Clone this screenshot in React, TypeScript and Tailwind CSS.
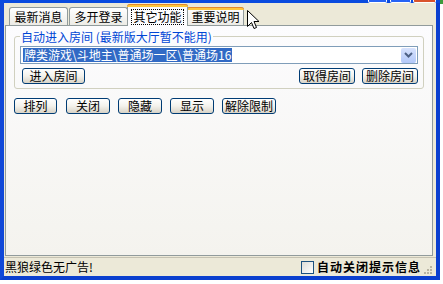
const FONT = "font-['SimSun','Noto_Sans_CJK_SC',sans-serif]";

function XpButton({ label, w }: { label: string; w: string }) {
  return (
    <button
      type="button"
      className={`${w} flex h-[16px] items-center justify-center rounded-[3px] border border-[#003C74] bg-gradient-to-b from-[#FFFFFF] via-[#F3F2EC] to-[#D8D3C7] text-[12px] leading-none text-black`}
    >
      {label}
    </button>
  );
}

function Tab({ label, w, hot }: { label: string; w: string; hot?: boolean }) {
  return (
    <div
      className={`${w} relative flex h-[18px] items-center justify-center rounded-t-[3px] border border-b-0 border-[#919B9C] bg-gradient-to-b from-[#FFFFFF] to-[#ECEBE6] text-[12px] leading-none text-black`}
    >
      {hot && <div className="absolute -left-px -right-px -top-px h-[3px] rounded-t-[3px] bg-[#FFC83C] border-t border-[#E68B2C]" />}
      {label}
    </div>
  );
}

export default function App() {
  return (
    <div className={`relative h-[284px] w-[443px] overflow-hidden bg-white ${FONT}`}>
      <div className="flex h-[280px] w-[440px] flex-col">
        {/* title bar bottom */}
        <div className="relative h-[3px] bg-[#0A4BDF]">
          <div className="absolute bottom-0 left-[368px] h-[3px] w-[19px] rounded-b-[2px] border border-t-0 border-white bg-[#2663F5]" />
          <div className="absolute bottom-0 left-[390px] h-[3px] w-[21px] rounded-b-[2px] border border-t-0 border-white bg-[#2663F5]" />
          <div className="absolute bottom-0 left-[413px] h-[3px] w-[23px] rounded-b-[2px] border border-t-0 border-white bg-[#D9532C]" />
        </div>
        <div className="flex flex-1 border-x-4 border-b-4 border-l-[#1048D8] border-r-[#0A3FCF] border-b-[#0A3FCF] bg-[#ECE9D8]">
          <div className="flex flex-1 flex-col">
            {/* tabs */}
            <div className="flex h-[22px] items-end pl-[5px]">
              <Tab label="最新消息" w="w-[59px]" />
              <div className="w-[1px]" />
              <Tab label="多开登录" w="w-[59px]" />
              <div className="relative z-10 -mx-[1px] -mb-px flex h-[22px] w-[61px] items-center justify-center rounded-t-[3px] border border-b-0 border-[#919B9C] bg-[#FCFCFE] text-[12px] leading-none text-black">
                <div className="absolute -left-px -right-px -top-px h-[3px] rounded-t-[3px] border-t border-[#E68B2C] bg-[#FFC83C]" />
                <span className="mt-[2px] border border-dotted border-black px-[1px] py-[1px]">其它功能</span>
              </div>
              <Tab label="重要说明" w="w-[57px]" hot />
            </div>
            {/* panel */}
            <div className="ml-[1px] flex h-[231px] w-[428px] flex-col border border-[#919B9C] bg-gradient-to-b from-[#FCFCFE] to-[#F4F3EE] px-[8px]">
              <div className="relative mt-[10px] h-[53px] rounded-[3px] border border-[#D0D0BF] px-[5px] pt-[9px]">
                <div className="absolute -top-[7px] left-[5px] bg-[#FCFCFE] px-[1px] text-[12px] leading-[13px] text-[#0046D5]">
                  自动进入房间 (最新版大厅暂不能用)
                </div>
                <div className="flex h-[18px] items-center border border-[#7F9DB9] bg-white pl-[2px] pr-[1px]">
                  <span className="bg-[#316AC5] px-[1px] text-[12px] leading-[14px] text-white">
                    牌类游戏\斗地主\普通场一区\普通场16
                  </span>
                  <div className="flex-1" />
                  <div className="flex h-[15px] w-[15px] items-center justify-center rounded-[2px] bg-gradient-to-b from-[#D7E2FD] to-[#B2C8F9]">
                    <svg width="9" height="6" viewBox="0 0 9 6">
                      <path d="M1 1 L4.5 4.5 L8 1" fill="none" stroke="#4D6185" strokeWidth="2" />
                    </svg>
                  </div>
                </div>
                <div className="mt-[4px] flex items-center">
                  <div className="ml-[2px]">
                    <XpButton label="进入房间" w="w-[63px]" />
                  </div>
                  <div className="flex-1" />
                  <XpButton label="取得房间" w="w-[56px]" />
                  <div className="w-[7px]" />
                  <XpButton label="删除房间" w="w-[56px]" />
                </div>
              </div>
              <div className="mt-[9px] flex items-center">
                <XpButton label="排列" w="w-[43px]" />
                <div className="w-[9px]" />
                <XpButton label="关闭" w="w-[44px]" />
                <div className="w-[8px]" />
                <XpButton label="隐藏" w="w-[44px]" />
                <div className="w-[8px]" />
                <XpButton label="显示" w="w-[44px]" />
                <div className="w-[8px]" />
                <XpButton label="解除限制" w="w-[54px]" />
              </div>
            </div>
            {/* status bar */}
            <div className="mt-[1px] flex flex-1 items-center border-t border-[#C5C2B2] pl-[1px] pr-[4px]">
              <span className="text-[12px] leading-none text-black">黑狼绿色无广告!</span>
              <div className="flex-1" />
              <div className="h-[13px] w-[13px] border border-[#1C5180] bg-gradient-to-br from-[#DCDCD7] to-white" />
              <span className="ml-[3px] text-[12px] font-bold leading-none tracking-[1px] text-black">自动关闭提示信息</span>
              <div className="ml-[3px] mt-[6px] grid grid-cols-3 gap-[1px]">
                <div className="h-[2px] w-[2px]" />
                <div className="h-[2px] w-[2px]" />
                <div className="h-[2px] w-[2px] bg-[#B8B4A2]" />
                <div className="h-[2px] w-[2px]" />
                <div className="h-[2px] w-[2px] bg-[#B8B4A2]" />
                <div className="h-[2px] w-[2px] bg-[#B8B4A2]" />
                <div className="h-[2px] w-[2px] bg-[#B8B4A2]" />
                <div className="h-[2px] w-[2px] bg-[#B8B4A2]" />
                <div className="h-[2px] w-[2px] bg-[#B8B4A2]" />
              </div>
            </div>
          </div>
        </div>
      </div>
      {/* green edge of the neighbouring window */}
      <div className="absolute right-0 top-0 h-[4px] w-[3px] bg-[#3C9A3C]" />
      {/* mouse cursor */}
      <svg className="absolute left-[247px] top-[10px]" width="13" height="21" viewBox="0 0 13 21">
        <path
          d="M0.5 0.5 L0.5 16.5 L4.5 12.5 L7 18.5 L9.5 17.5 L7 11.5 L12 11.5 Z"
          fill="white"
          stroke="black"
          strokeWidth="1"
          strokeLinejoin="miter"
        />
      </svg>
    </div>
  );
}
